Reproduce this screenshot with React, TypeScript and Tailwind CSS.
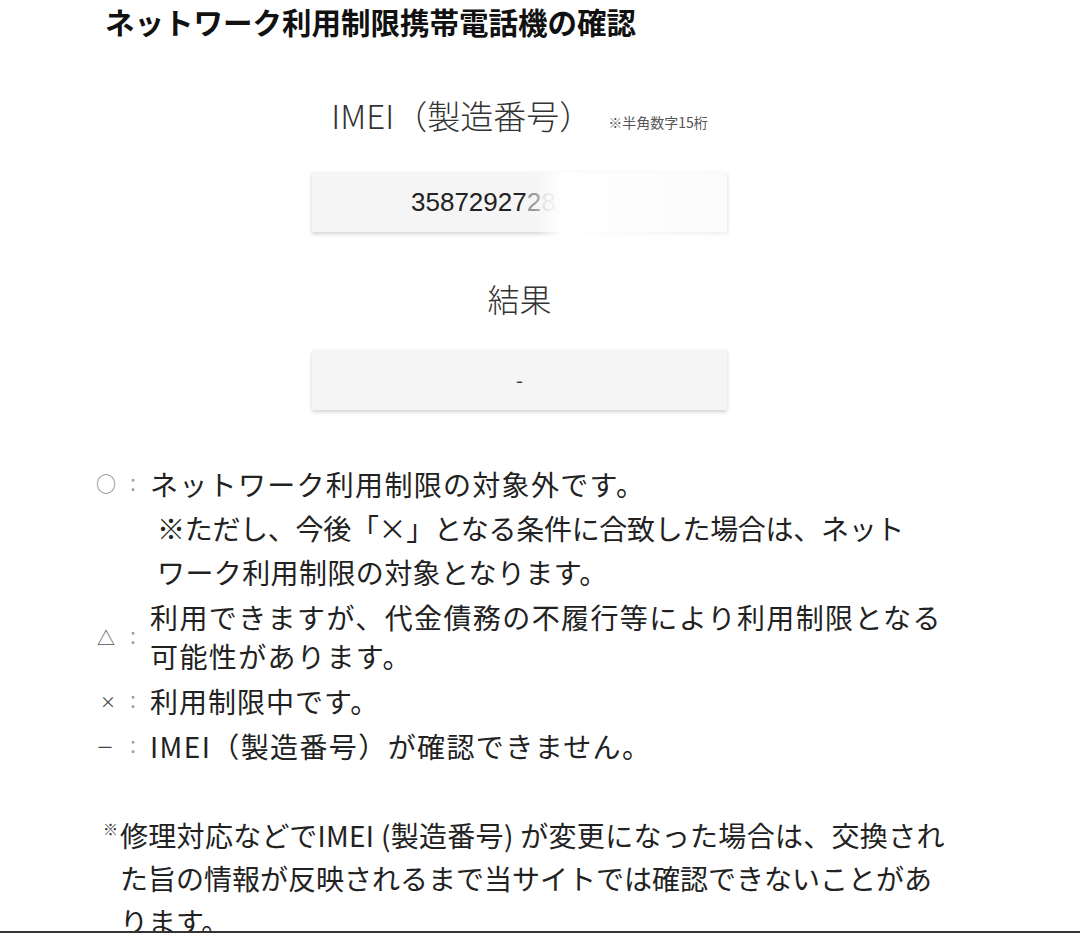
const jp = "font-['Noto_Sans_CJK_JP','Noto_Sans',sans-serif]";

const Colon = () => (
  <span className="w-[16px] text-center text-[18px] text-[#999]">：</span>
);

const Mark = ({ children, className }: { children: React.ReactNode; className: string }) => (
  <span className="flex w-[54px] shrink-0 items-center">
    <span className={`w-[28px] leading-none ${className}`}>{children}</span>
    <Colon />
  </span>
);

export default function App() {
  return (
    <div className={`relative h-[933px] w-[1080px] overflow-hidden bg-white text-[#222] ${jp}`}>
      <div className="ml-[96px] w-[847px]">
        <h1 className="pl-[9px] text-[29.5px] font-bold leading-[42px] text-[#111]">
          ネットワーク利用制限携帯電話機の確認
        </h1>

        {/* IMEI input */}
        <div className="mt-[51px] flex h-[44px] items-center justify-center">
          <span className="text-[33px] font-light leading-[44px] text-[#333]">IMEI（製造番号）</span>
          <span className="ml-[16px] mt-[14px] text-[14px] text-[#555]">※半角数字15桁</span>
        </div>
        <div className="mx-auto mt-[35px] w-[415px]">
          <div className="relative flex h-[60px] items-center justify-center bg-[#f5f5f5] shadow-[0_2px_4px_rgba(0,0,0,0.18)]">
            <span className="font-['Liberation_Sans',sans-serif] text-[26px] leading-none">
              <span className="text-[#222]">35872927</span>
              <span className="text-[#999]">2</span>
              <span className="text-[#d5d5d5]">8</span>
              <span className="text-transparent">00000</span>
            </span>
            <div className="absolute bottom-[-6px] left-[222px] right-0 top-0 bg-linear-to-r from-white/0 via-white via-15% to-white/60" />
          </div>
        </div>

        {/* result */}
        <div className="mt-[44px] text-center text-[32px] font-light leading-[44px] text-[#333]">結果</div>
        <div className="mx-auto mt-[30px] flex h-[60px] w-[415px] items-center justify-center bg-[#f5f5f5] text-[20px] text-[#333] shadow-[0_2px_4px_rgba(0,0,0,0.18)]">
          -
        </div>

        {/* legend */}
        <div className="mt-[52px] whitespace-nowrap text-[28px]">
          <div className="flex h-[44px] items-center">
            <Mark className="text-[20px] text-[#888]">○</Mark>
            <span className="leading-[44px] tracking-[1.3px]">ネットワーク利用制限の対象外です。</span>
          </div>
          <div className="pl-[61px] leading-[44px]">
            <div className="tracking-[-0.3px]">※ただし、今後「×」となる条件に合致した場合は、ネット</div>
            <div className="tracking-[0.4px]">ワーク利用制限の対象となります。</div>
          </div>

          <div className="mt-[4px] flex items-center">
            <Mark className="pl-[1px] text-[18px] text-[#555]">△</Mark>
            <span className="leading-[39px] tracking-[1.4px]">
              利用できますが、代金債務の不履行等により利用制限となる
              <br />
              可能性があります。
            </span>
          </div>

          <div className="mt-[3px] flex h-[44px] items-center">
            <Mark className="pl-[4px] text-[16px] text-[#444]">×</Mark>
            <span className="leading-[44px] tracking-[1px]">利用制限中です。</span>
          </div>

          <div className="mt-[1px] flex h-[44px] items-center">
            <Mark className="text-[18px] text-[#444]">－</Mark>
            <span className="leading-[44px] tracking-[1.4px]">IMEI（製造番号）が確認できません。</span>
          </div>

          {/* note */}
          <div className="mt-[46px] flex">
            <span className="w-[24px] shrink-0 pl-[7px] text-[15px] leading-[30px] text-[#333]">※</span>
            <p className="leading-[43px]">
              <span className="tracking-[0.3px]">修理対応などでIMEI (製造番号) が変更になった場合は、交換され</span>
              <br />
              た旨の情報が反映されるまで当サイトでは確認できないことがあ
              <br />
              ります。
            </p>
          </div>
        </div>
      </div>
      <div className="absolute bottom-0 left-0 right-0 h-[2px] bg-[#333]" />
    </div>
  );
}
